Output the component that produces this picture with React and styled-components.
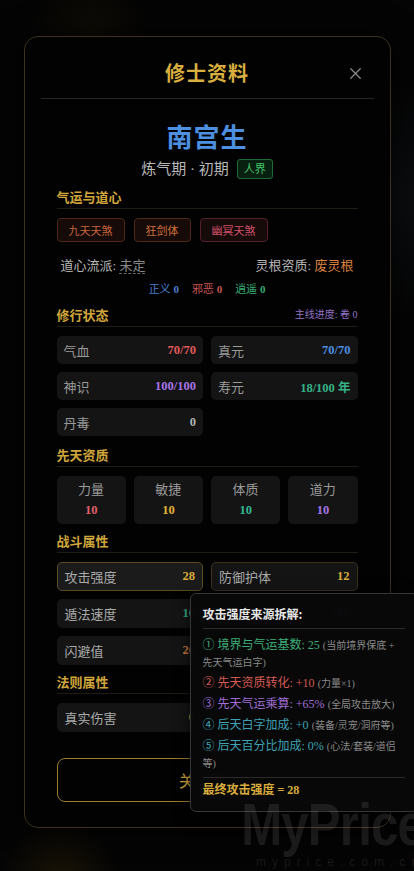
import React from 'react'
import styled, { createGlobalStyle } from 'styled-components'
import { X } from 'lucide-react'

const GlobalStyle = createGlobalStyle`
    html, body {
        margin: 0;
        padding: 0;
        background: #040404;
        overflow: hidden;
    }
    body {
        font-family: "Liberation Serif", "Noto Sans CJK SC", serif;
        color: #bbb;
    }
`

const status = [
    { label: '气血', value: '70/70', color: '#e05a5a' },
    { label: '真元', value: '70/70', color: '#4d8fe0' },
    { label: '神识', value: '100/100', color: '#a774e6' },
    { label: '寿元', value: '18/100 年', color: '#35b286' },
    { label: '丹毒', value: '0', color: '#b5b5b5' },
]

const talents = [
    { label: '力量', value: 10, color: '#e0606c' },
    { label: '敏捷', value: 10, color: '#e3b335' },
    { label: '体质', value: 10, color: '#34b892' },
    { label: '道力', value: 10, color: '#a774e6' },
]

const breakdown = [
    { no: '①', text: '境界与气运基数: 25', note: '(当前境界保底 + 先天气运白字)', color: '#3fae7a' },
    { no: '②', text: '先天资质转化: +10', note: '(力量×1)', color: '#d45a52' },
    { no: '③', text: '先天气运乘算: +65%', note: '(全局攻击放大)', color: '#a06ed6' },
    { no: '④', text: '后天白字加成: +0', note: '(装备/灵宠/洞府等)', color: '#3fa2b4' },
    { no: '⑤', text: '后天百分比加成: 0%', note: '(心法/套装/道侣等)', color: '#3fa2b4' },
]

const App = () => {
    return (
        <>
        <GlobalStyle />
        <Page>
            <Modal>
                <Header>
                    <span />
                    <Title>修士资料</Title>
                    <Close><X size={19} strokeWidth={1.6} /></Close>
                </Header>

                <Body>
                    <Name>南宫生</Name>
                    <Realm>
                        炼气期 · 初期
                        <Badge>人界</Badge>
                    </Realm>

                    <SectionHead $mt={8}>
                        <span>气运与道心</span>
                    </SectionHead>
                    <Tags>
                        <Tag $color='#c8643f' $border='#4f2617'>九天天煞</Tag>
                        <Tag $color='#d0703c' $border='#4f2a16'>狂剑体</Tag>
                        <Tag $color='#d2506a' $border='#542030'>幽冥天煞</Tag>
                    </Tags>

                    <DaoRow>
                        <span>道心流派: <Undecided>未定</Undecided></span>
                        <span>灵根资质: <Root>废灵根</Root></span>
                    </DaoRow>
                    <Alignment>
                        <Align $color='#4c7ccc'>正义 <b>0</b></Align>
                        <Align $color='#c85454'>邪恶 <b>0</b></Align>
                        <Align $color='#39a872'>逍遥 <b>0</b></Align>
                    </Alignment>

                    <SectionHead $mt={9}>
                        <span>修行状态</span>
                        <Progress>主线进度: 卷 0</Progress>
                    </SectionHead>
                    <StatGrid>
                        {status.map(s => (
                            <StatCard key={s.label}>
                                <span>{s.label}</span>
                                <StatValue $color={s.color}>{s.value}</StatValue>
                            </StatCard>
                        ))}
                    </StatGrid>

                    <SectionHead $mt={10}>
                        <span>先天资质</span>
                    </SectionHead>
                    <TalentGrid>
                        {talents.map(t => (
                            <TalentBox key={t.label}>
                                <span>{t.label}</span>
                                <StatValue $color={t.color}>{t.value}</StatValue>
                            </TalentBox>
                        ))}
                    </TalentGrid>

                    <SectionHead $mt={8}>
                        <span>战斗属性</span>
                    </SectionHead>
                    <CombatGrid>
                        <CombatCard $active>
                            <span>攻击强度</span>
                            <StatValue $color='#d9ac3e'>28</StatValue>
                            <Tooltip>
                                <TipTitle>攻击强度来源拆解:</TipTitle>
                                <TipList>
                                    {breakdown.map(b => (
                                        <TipItem key={b.no} $color={b.color}>
                                            {b.no} {b.text} <Note>{b.note}</Note>
                                        </TipItem>
                                    ))}
                                </TipList>
                                <TipTotal>最终攻击强度 = 28</TipTotal>
                            </Tooltip>
                        </CombatCard>
                        <CombatCard $outlined>
                            <span>防御护体</span>
                            <StatValue $color='#d9ac3e'>12</StatValue>
                        </CombatCard>
                        <CombatCard>
                            <span>遁法速度</span>
                            <StatValue $color='#35b286'>10</StatValue>
                        </CombatCard>
                        <CombatCard>
                            <span>神识强度</span>
                            <StatValue $color='#a774e6'>100</StatValue>
                        </CombatCard>
                        <CombatCard>
                            <span>闪避值</span>
                            <StatValue $color='#d07a3c'>20</StatValue>
                        </CombatCard>
                        <CombatCard>
                            <span>暴击率</span>
                            <StatValue $color='#e05a5a'>5%</StatValue>
                        </CombatCard>
                    </CombatGrid>

                    <SectionHead $mt={8}>
                        <span>法则属性</span>
                    </SectionHead>
                    <CombatGrid>
                        <CombatCard>
                            <span>真实伤害</span>
                            <StatValue $color='#d9ac3e'>0</StatValue>
                        </CombatCard>
                    </CombatGrid>

                    <CloseButton>关闭</CloseButton>
                </Body>
            </Modal>
            <Watermark>
                <strong>MyPrice</strong>
                <small>myprice.com.cn</small>
            </Watermark>
        </Page>
        </>
    )
}

const Page = styled.div`
    position: relative;
    width: 414px;
    height: 871px;
    display: flex;
    justify-content: center;
    align-items: flex-start;
    padding-top: 36px;
    box-sizing: border-box;
    background:
        radial-gradient(circle at 60px 880px, rgba(120, 90, 20, 0.18), transparent 60px),
        radial-gradient(circle at 90px 30px, rgba(90, 70, 20, 0.12), transparent 60px),
        radial-gradient(circle at 400px 200px, rgba(30, 40, 50, 0.25), transparent 120px),
        #040404;
`

const Modal = styled.div`
    width: 367px;
    height: 792px;
    box-sizing: border-box;
    border: 1px solid #3b321d;
    border-radius: 14px;
    background: #020202;
    padding: 0 16px;
    box-shadow: 0 0 30px rgba(0, 0, 0, 0.8);
`

const Header = styled.div`
    display: grid;
    grid-template-columns: 1fr auto 1fr;
    align-items: center;
    padding: 22px 0 11px;
    border-bottom: 1px solid #262626;
`

const Title = styled.h2`
    margin: 0;
    font-family: "Noto Sans CJK SC", sans-serif;
    font-size: 20px;
    line-height: 28px;
    font-weight: 700;
    color: #d9b040;
    letter-spacing: 1px;
`

const Close = styled.button`
    justify-self: end;
    margin-right: 9px;
    background: none;
    border: none;
    padding: 0;
    color: #8a8a8a;
    display: flex;
`

const Body = styled.div`
    padding: 0 16px;
    display: flex;
    flex-direction: column;
`

const Name = styled.h1`
    margin: 20px 0 0;
    text-align: center;
    font-family: "Noto Sans CJK SC", sans-serif;
    font-size: 26px;
    line-height: 34px;
    font-weight: 700;
    color: #4d8fe0;
    letter-spacing: 1px;
`

const Realm = styled.div`
    margin-top: 5px;
    display: flex;
    justify-content: center;
    align-items: center;
    gap: 8px;
    font-size: 15px;
    line-height: 22px;
    color: #b8b8b8;
`

const Badge = styled.span`
    font-size: 11px;
    line-height: 18px;
    padding: 0 6px;
    border: 1px solid #1f6b33;
    background: #08200f;
    color: #45c46a;
    border-radius: 3px;
`

const SectionHead = styled.div`
    margin-top: ${props => props.$mt}px;
    display: flex;
    justify-content: space-between;
    align-items: center;
    padding-bottom: 3px;
    border-bottom: 1px solid #1f1c14;
    font-family: "Noto Sans CJK SC", sans-serif;
    font-size: 13px;
    line-height: 17px;
    font-weight: 700;
    color: #d0a63c;
`

const Progress = styled.span`
    font-family: "Liberation Serif", "Noto Sans CJK SC", serif;
    font-size: 10px;
    font-weight: 400;
    color: #9474c8;
`

const Tags = styled.div`
    margin-top: 9px;
    display: flex;
    gap: 9px;
`

const Tag = styled.span`
    height: 24px;
    box-sizing: border-box;
    padding: 0 11px;
    display: flex;
    align-items: center;
    font-size: 11px;
    color: ${props => props.$color};
    border: 1px solid ${props => props.$border};
    background: #160b08;
    border-radius: 4px;
`

const DaoRow = styled.div`
    margin-top: 15px;
    padding: 0 4px;
    display: flex;
    justify-content: space-between;
    font-size: 13px;
    line-height: 18px;
    color: #b5b5b5;
`

const Undecided = styled.span`
    color: #888;
    border-bottom: 1px dashed #666;
`

const Root = styled.span`
    color: #d9813f;
`

const Alignment = styled.div`
    margin-top: 7px;
    display: flex;
    justify-content: center;
    gap: 13px;
    font-size: 11px;
    line-height: 15px;
`

const Align = styled.span`
    color: ${props => props.$color};
    b { font-weight: 700; }
`

const StatGrid = styled.div`
    margin-top: 9px;
    display: grid;
    grid-template-columns: 1fr 1fr;
    gap: 8px;
`

const StatCard = styled.div`
    height: 28px;
    padding: 0 7px;
    display: flex;
    align-items: center;
    justify-content: space-between;
    background: #141414;
    border-radius: 5px;
    font-size: 13px;
    color: #9a9a9a;
`

const StatValue = styled.span`
    font-size: 12.5px;
    font-weight: 700;
    color: ${props => props.$color};
`

const TalentGrid = styled.div`
    margin-top: 9px;
    display: grid;
    grid-template-columns: repeat(4, 1fr);
    gap: 8px;
`

const TalentBox = styled.div`
    height: 48px;
    display: flex;
    flex-direction: column;
    align-items: center;
    justify-content: center;
    gap: 2px;
    background: #141414;
    border-radius: 5px;
    font-size: 13px;
    line-height: 18px;
    color: #9a9a9a;
`

const CombatGrid = styled.div`
    margin-top: 9px;
    display: grid;
    grid-template-columns: 1fr 1fr;
    gap: 8px;
`

const CombatCard = styled.div`
    position: relative;
    height: 29px;
    box-sizing: border-box;
    padding: 0 7px;
    display: flex;
    align-items: center;
    justify-content: space-between;
    background: ${props => props.$active ? '#1b1b1b' : '#141414'};
    border: 1px solid ${props => props.$active ? '#5c4c26' : props.$outlined ? '#3a321c' : 'transparent'};
    border-radius: 5px;
    font-size: 13px;
    color: #aaa;
`

const Tooltip = styled.div`
    position: absolute;
    top: calc(100% + 3px);
    left: 132px;
    z-index: 5;
    width: 228px;
    box-sizing: border-box;
    padding: 11px 12px 12px;
    background: rgba(8, 8, 8, 0.98);
    border: 1px solid #363636;
    border-radius: 6px;
    box-shadow: 0 4px 16px rgba(0, 0, 0, 0.7);
`

const TipTitle = styled.div`
    font-family: "Noto Sans CJK SC", sans-serif;
    font-size: 12px;
    line-height: 17px;
    font-weight: 700;
    color: #e6e6e6;
    padding-bottom: 6px;
    border-bottom: 1px solid #2a2a2a;
`

const TipList = styled.div`
    padding: 8px 0 5px;
    display: flex;
    flex-direction: column;
    gap: 4px;
    border-bottom: 1px solid #2a2a2a;
`

const TipItem = styled.div`
    font-size: 12px;
    line-height: 17px;
    color: ${props => props.$color};
`

const Note = styled.span`
    font-size: 10px;
    color: #8a8a8a;
`

const TipTotal = styled.div`
    margin-top: 4px;
    font-size: 12px;
    line-height: 17px;
    font-weight: 700;
    color: #d9ac3e;
`

const CloseButton = styled.button`
    margin-top: 26px;
    height: 44px;
    background: transparent;
    border: 1.5px solid #9c7c2c;
    border-radius: 8px;
    font-family: "Noto Sans CJK SC", sans-serif;
    font-size: 16px;
    color: #d9ac3e;
    letter-spacing: 12px;
`

const Watermark = styled.div`
    position: absolute;
    right: -10px;
    bottom: 2px;
    z-index: 10;
    display: flex;
    flex-direction: column;
    align-items: flex-end;
    pointer-events: none;
    color: rgba(150, 150, 150, 0.16);
    font-family: "Liberation Sans", sans-serif;

    strong {
        font-size: 60px;
        line-height: 56px;
        font-weight: 700;
        letter-spacing: -1px;
        transform: scaleX(0.82);
        transform-origin: right;
    }

    small {
        font-size: 12px;
        letter-spacing: 6px;
        margin-top: 2px;
    }
`

export default App
